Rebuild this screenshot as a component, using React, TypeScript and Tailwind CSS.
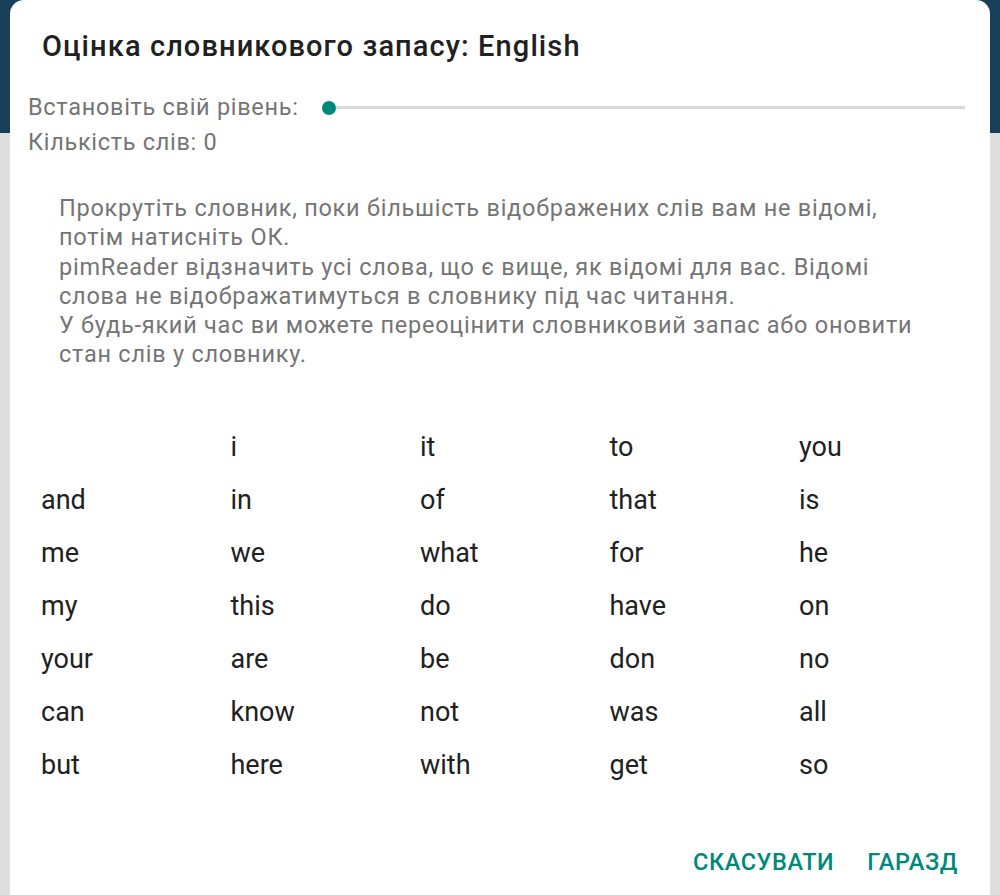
import React from 'react';

const words: string[] = [
  '', 'i', 'it', 'to', 'you',
  'and', 'in', 'of', 'that', 'is',
  'me', 'we', 'what', 'for', 'he',
  'my', 'this', 'do', 'have', 'on',
  'your', 'are', 'be', 'don', 'no',
  'can', 'know', 'not', 'was', 'all',
  'but', 'here', 'with', 'get', 'so',
  'oh', 'at', 'up', 'now', 'like',
];

export default function App() {
  return (
    <div
      className="relative w-[1000px] h-[895px] overflow-hidden bg-[#dedede]"
      style={{ fontFamily: 'Roboto, "Noto Sans", sans-serif' }}
    >
      {/* app toolbar behind the dialog */}
      <div className="h-[133px] bg-[#173f5a]" />

      {/* Dialog */}
      <div className="absolute left-[10px] right-[10px] top-0 bottom-[-20px] bg-white rounded-t-[14px] flex flex-col">
        <h2 className="pl-[32px] pt-[28px] text-[29px] leading-[36px] font-medium text-[#212121] tracking-[1.1px] whitespace-nowrap">
          Оцінка словникового запасу: English
        </h2>

        <div className="pl-[18px] pr-[25px] mt-[26px] text-[23.5px] tracking-[0.7px] text-[#757575]">
          <div className="flex items-center h-[35px]">
            <span className="whitespace-nowrap">Встановіть свій рівень:</span>
            <div className="relative flex-1 ml-[30px] h-[14px] flex items-center">
              <div className="h-[3px] w-full bg-[#d9d9d9]" />
              <div className="absolute left-[-7px] top-0 w-[14px] h-[14px] rounded-full bg-[#00897b]" />
            </div>
          </div>
          <div className="h-[35px] flex items-center">Кількість слів: 0</div>
        </div>

        <p className="pl-[49px] mt-[34px] text-[23.5px] leading-[29.3px] tracking-[0.75px] text-[#757575] whitespace-nowrap">
          Прокрутіть словник, поки більшість відображених слів вам не відомі,
          <br />
          потім натисніть ОК.
          <br />
          pimReader відзначить усі слова, що є вище, як відомі для вас. Відомі
          <br />
          слова не відображатимуться в словнику під час читання.
          <br />
          У будь-який час ви можете переоцінити словниковий запас або оновити
          <br />
          стан слів у словнику.
        </p>

        <div className="mt-[51px] ml-[31px] h-[385px] overflow-hidden">
          <div className="grid grid-cols-[repeat(5,189.5px)]">
            {words.map((w, i) => (
              <div key={i} className="h-[53px] flex items-center text-[27px] text-[#212121]">
                {w}
              </div>
            ))}
          </div>
        </div>

        <div className="flex justify-end items-center gap-[33px] pr-[32px] mt-[43px] h-[28px] text-[23.5px] font-medium text-[#00897b] tracking-[0.6px]">
          <button>СКАСУВАТИ</button>
          <button>ГАРАЗД</button>
        </div>
      </div>
    </div>
  );
}
